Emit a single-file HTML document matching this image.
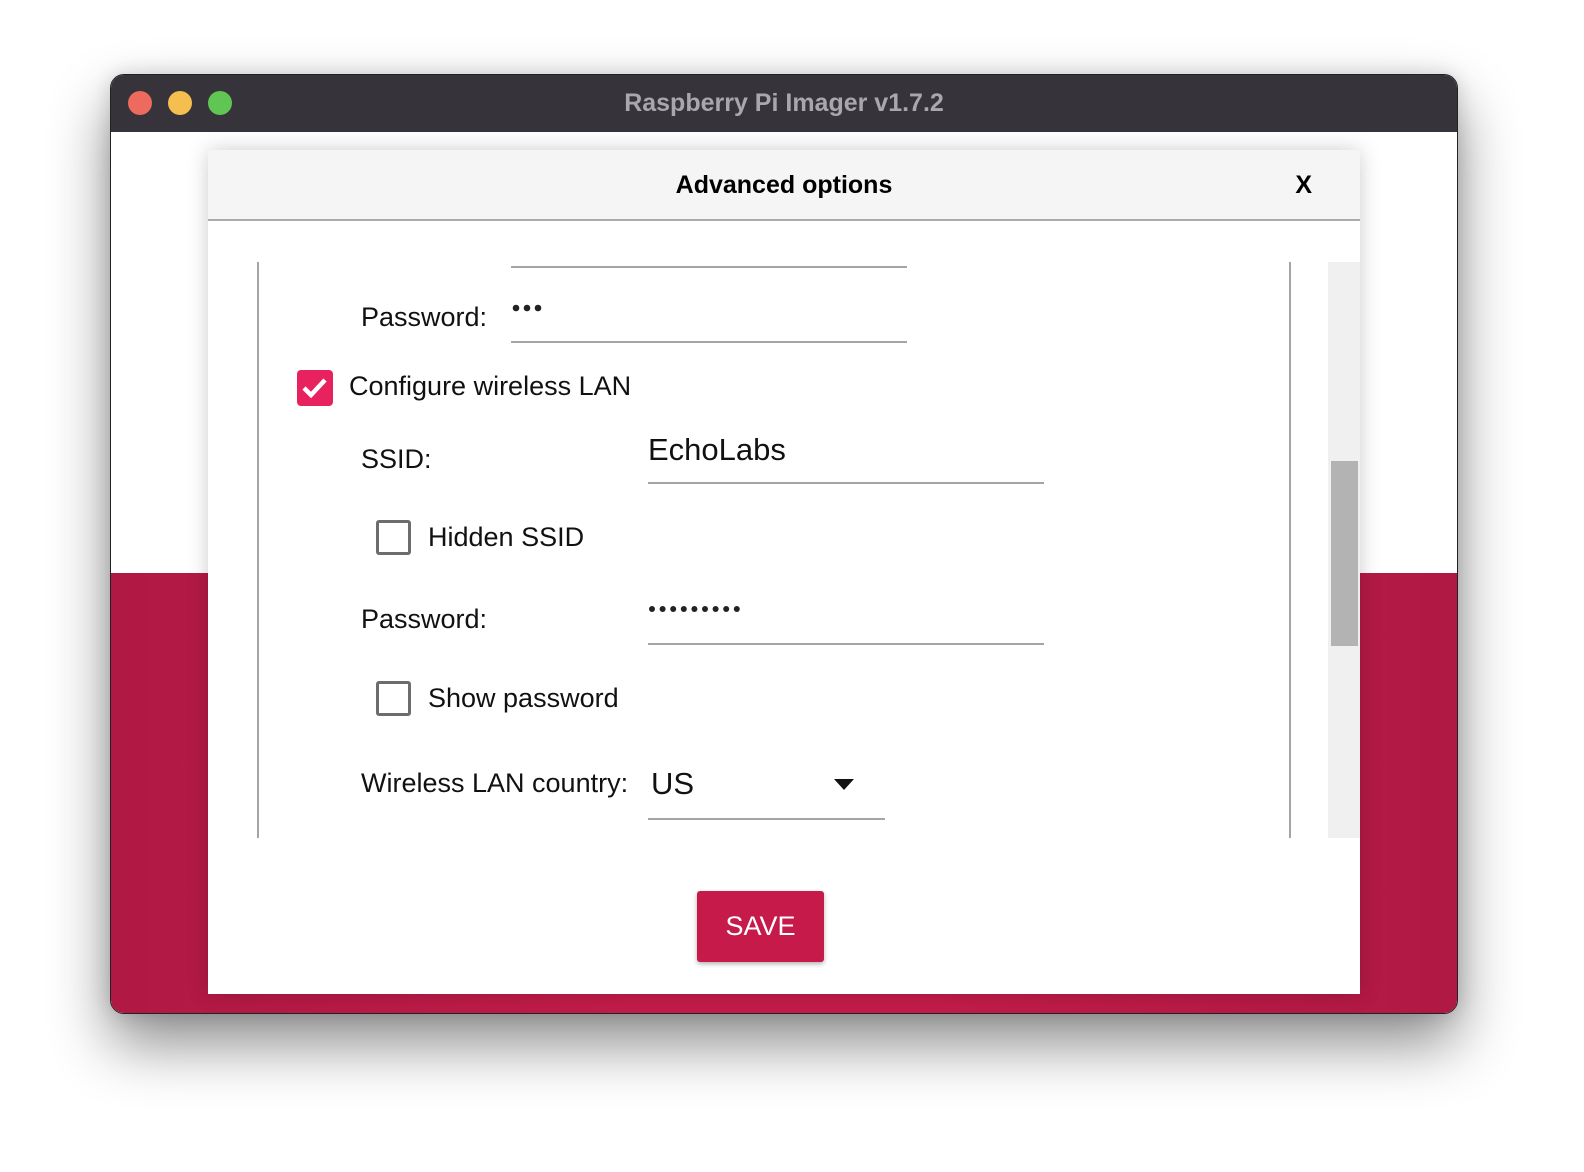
<!DOCTYPE html>
<html><head><meta charset="utf-8"><style>
*{margin:0;padding:0;box-sizing:border-box}
body{width:1584px;height:1172px;background:#fff;position:relative;overflow:hidden;font-family:"Liberation Sans",sans-serif}
.win{position:absolute;left:110px;top:74px;width:1348px;height:940px;border-radius:14px;overflow:hidden;border:1px solid #222;box-shadow:0 30px 60px rgba(0,0,0,.45),0 0 20px rgba(0,0,0,.15);background:#fff}
.tb{position:absolute;left:0;top:0;right:0;height:57px;background:#37333b;color:#a9a7ab;font-weight:bold;font-size:25px;text-align:center;line-height:56px}
.dot{position:absolute;top:16px;width:24px;height:24px;border-radius:50%}
.red{position:absolute;left:0;right:0;top:498px;bottom:0;background:linear-gradient(90deg,#b01944,#c41c4a 40%,#c41c4a 60%,#b01944)}
.dlg{position:absolute;left:208px;top:150px;width:1152px;height:844px;background:#fff;box-shadow:0 0 20px rgba(0,0,0,.2)}
.hd{position:absolute;left:0;top:0;right:0;height:71px;background:#f5f5f5;border-bottom:2px solid #ababab;font-weight:bold;font-size:25px;text-align:center;line-height:70px;color:#000}
.x{position:absolute;right:48px;top:0;font-size:25px}
.t{position:absolute;font-size:27px;color:#111;white-space:nowrap}
.ln{position:absolute;height:2px;background:#a5a5a5}
.cb{position:absolute;width:35px;height:35px;border:3px solid #6d6d6d;border-radius:3px}
</style></head><body>
<div class="win">
 <div class="tb">Raspberry Pi Imager v1.7.2
  <div class="dot" style="left:17px;background:#ed6a5e"></div>
  <div class="dot" style="left:57px;background:#f5bf4f"></div>
  <div class="dot" style="left:97px;background:#61c554"></div>
 </div>
 <div class="red"></div>
</div>
<div class="dlg">
 <div class="hd">Advanced options<span class="x">X</span></div>
 <div style="position:absolute;left:49px;top:112px;width:2px;height:576px;background:#a5a5a5"></div>
 <div style="position:absolute;left:1081px;top:112px;width:2px;height:576px;background:#a5a5a5"></div>
 <div style="position:absolute;left:1120px;top:112px;width:32px;height:576px;background:#f0f0f0"></div>
 <div style="position:absolute;left:1123px;top:311px;width:27px;height:185px;background:#b3b3b3"></div>
 <div class="ln" style="left:303px;top:116px;width:396px"></div>
 <div class="t" style="left:153px;top:152px">Password:</div>
 <svg style="position:absolute;left:300px;top:150px" width="50" height="16"><circle cx="8" cy="8" r="3.3" fill="#222"/><circle cx="19" cy="8" r="3.3" fill="#222"/><circle cx="30" cy="8" r="3.3" fill="#222"/></svg>
 <div class="ln" style="left:303px;top:191px;width:396px"></div>
 <div style="position:absolute;left:89px;top:220px;width:36px;height:36px;background:#e8215f;border-radius:4px">
  <svg width="36" height="36" viewBox="0 0 36 36"><path d="M7 18 L14 25 L28 10" stroke="#fff" stroke-width="4.5" fill="none"/></svg></div>
 <div class="t" style="left:141px;top:221px">Configure wireless LAN</div>
 <div class="t" style="left:153px;top:294px">SSID:</div>
 <div class="t" style="left:440px;top:282px;font-size:31px">EchoLabs</div>
 <div class="ln" style="left:440px;top:332px;width:396px"></div>
 <div class="cb" style="left:168px;top:370px"></div>
 <div class="t" style="left:220px;top:372px">Hidden SSID</div>
 <div class="t" style="left:153px;top:454px">Password:</div>
 <svg style="position:absolute;left:436px;top:451px" width="110" height="16">
  <circle cx="8" cy="8" r="3" fill="#222"/><circle cx="18.6" cy="8" r="3" fill="#222"/><circle cx="29.2" cy="8" r="3" fill="#222"/><circle cx="39.8" cy="8" r="3" fill="#222"/><circle cx="50.4" cy="8" r="3" fill="#222"/><circle cx="61" cy="8" r="3" fill="#222"/><circle cx="71.6" cy="8" r="3" fill="#222"/><circle cx="82.2" cy="8" r="3" fill="#222"/><circle cx="92.8" cy="8" r="3" fill="#222"/></svg>
 <div class="ln" style="left:440px;top:493px;width:396px"></div>
 <div class="cb" style="left:168px;top:531px"></div>
 <div class="t" style="left:220px;top:533px">Show password</div>
 <div class="t" style="left:153px;top:618px">Wireless LAN country:</div>
 <div class="t" style="left:443px;top:616px;font-size:31px">US</div>
 <svg style="position:absolute;left:626px;top:629px" width="22" height="12"><path d="M0 0 L20 0 L10 11Z" fill="#111"/></svg>
 <div class="ln" style="left:440px;top:668px;width:237px"></div>
 <div style="position:absolute;left:489px;top:741px;width:127px;height:71px;background:#c51a4a;border-radius:3px;box-shadow:0 2px 5px rgba(0,0,0,.3);color:#fff;font-size:27px;text-align:center;line-height:71px">SAVE</div>
</div>
</body></html>
